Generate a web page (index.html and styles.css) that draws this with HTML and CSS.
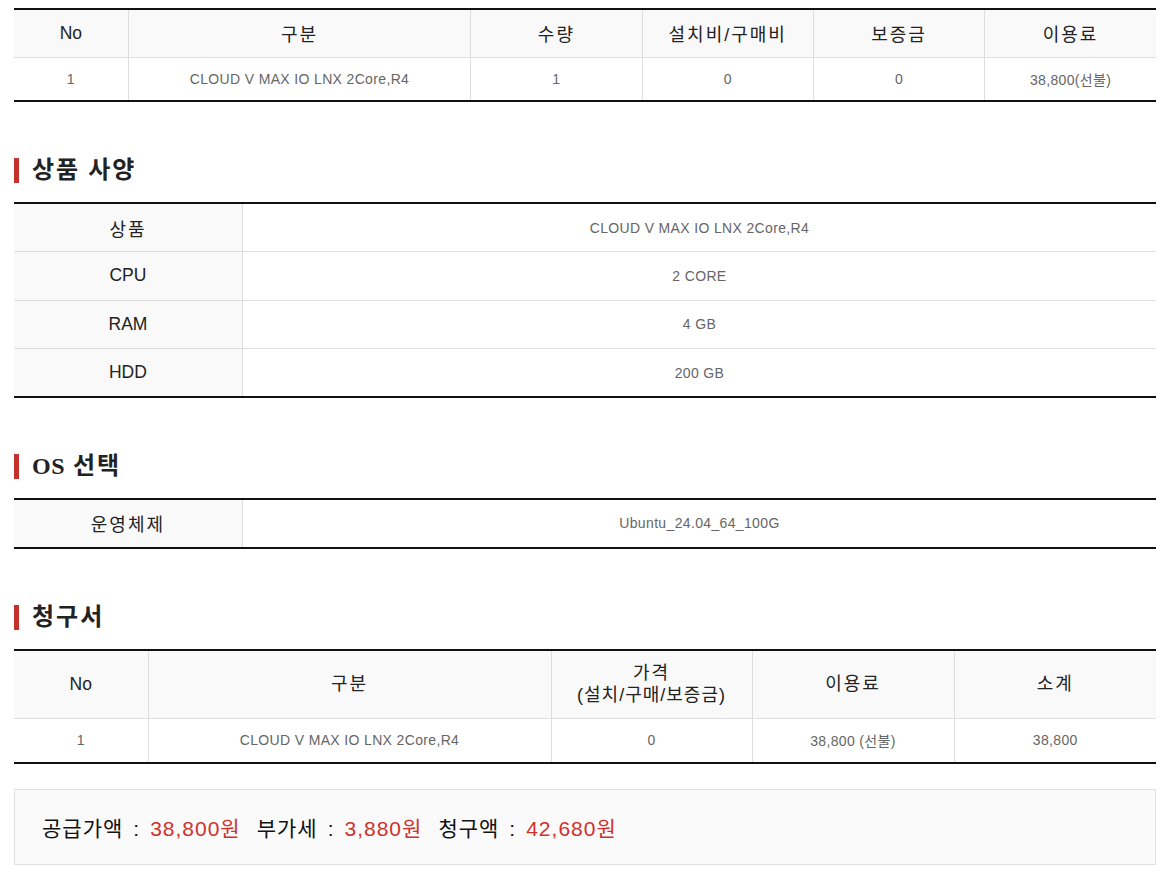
FILE: index.html
```html
<!DOCTYPE html>
<html lang="ko">
<head>
<meta charset="utf-8">
<title>주문 내역</title>
<link rel="stylesheet" href="styles.css">
</head>
<body>
<div class="page">
  <table class="tbl order">
    <colgroup>
      <col class="w10"><col class="w30"><col class="w15"><col class="w15"><col class="w15"><col class="w15">
    </colgroup>
    <thead>
      <tr><th>No</th><th class="ko">구분</th><th class="ko">수량</th><th class="ko">설치비/구매비</th><th class="ko">보증금</th><th class="ko">이용료</th></tr>
    </thead>
    <tbody>
      <tr><td>1</td><td>CLOUD V MAX IO LNX 2Core,R4</td><td>1</td><td>0</td><td>0</td><td>38,800(선불)</td></tr>
    </tbody>
  </table>

  <h2 class="sec-title">상품 사양</h2>
  <table class="tbl spec">
    <colgroup><col class="w20"><col class="w80"></colgroup>
    <tbody>
      <tr><th class="ko">상품</th><td>CLOUD V MAX IO LNX 2Core,R4</td></tr>
      <tr><th>CPU</th><td>2 CORE</td></tr>
      <tr><th>RAM</th><td>4 GB</td></tr>
      <tr><th>HDD</th><td>200 GB</td></tr>
    </tbody>
  </table>

  <h2 class="sec-title"><span class="latin">OS</span> 선택</h2>
  <table class="tbl spec os">
    <colgroup><col class="w20"><col class="w80"></colgroup>
    <tbody>
      <tr><th class="ko">운영체제</th><td>Ubuntu_24.04_64_100G</td></tr>
    </tbody>
  </table>

  <h2 class="sec-title">청구서</h2>
  <table class="tbl invoice">
    <colgroup>
      <col class="c-no"><col class="c-name"><col class="c-price"><col class="c-fee"><col class="c-sum">
    </colgroup>
    <thead>
      <tr><th>No</th><th class="ko">구분</th><th class="ko">가격<br><span class="sub">(설치/구매/보증금)</span></th><th class="ko">이용료</th><th class="ko">소계</th></tr>
    </thead>
    <tbody>
      <tr><td>1</td><td>CLOUD V MAX IO LNX 2Core,R4</td><td>0</td><td>38,800 (선불)</td><td>38,800</td></tr>
    </tbody>
  </table>

  <div class="summary">
    <span class="item"><span class="lbl">공급가액</span><span class="colon">:</span><span class="val">38,800원</span></span>
    <span class="item"><span class="lbl">부가세</span><span class="colon">:</span><span class="val">3,880원</span></span>
    <span class="item"><span class="lbl">청구액</span><span class="colon">:</span><span class="val">42,680원</span></span>
  </div>
</div>
</body>
</html>
```

FILE: styles.css
```css
* { box-sizing: border-box; }
html, body { margin: 0; padding: 0; background: #fff; }
body {
  font-family: "Liberation Sans", "Noto Sans CJK KR", sans-serif;
  color: #333;
}
.page {
  width: 1169px;
  padding: 8px 13px 0 14px;
}
.tbl {
  width: 100%;
  border-collapse: collapse;
  table-layout: fixed;
  border-top: 2px solid #111;
  border-bottom: 2px solid #111;
}
.tbl th, .tbl td {
  border: 1px solid #dedede;
  text-align: center;
  padding: 0;
}
.tbl tr > :first-child { border-left: none; }
.tbl tr > :last-child { border-right: none; }
.tbl th {
  background: #f9f9f9;
  font-weight: normal;
  font-size: 17.5px;
  color: #222;
}
.tbl th.ko {
  font-size: 18px;
  letter-spacing: 2px;
}
.tbl th .sub { letter-spacing: 1px; }
.tbl td {
  font-size: 14px;
  letter-spacing: 0.35px;
  color: #666;
}
.order thead th { height: 48px; border-top: none; }
.order tbody td { height: 44px; border-bottom: none; }

.w10 { width: 10%; }
.w15 { width: 15%; }
.w20 { width: 20%; }
.w30 { width: 30%; }
.w80 { width: 80%; }

.spec th, .spec td { height: 48.5px; }
.spec tr:first-child > * { border-top: none; }
.spec tr:last-child > * { border-bottom: none; }
.os th, .os td { height: 48.5px; }

.c-no { width: 134px; }
.c-name { width: 403px; }
.c-price { width: 201px; }
.c-fee { width: 202px; }
.c-sum { width: 202px; }
.invoice thead th { height: 69px; border-top: none; line-height: 22px; }
.invoice tbody td { height: 44px; border-bottom: none; }

.sec-title {
  margin: 56px 0 19px;
  border-left: 5px solid #c4302b;
  padding-left: 13px;
  height: 25px;
  line-height: 25px;
  font-family: "Liberation Serif", "Noto Sans CJK KR", serif;
  font-size: 24px;
  letter-spacing: 2px;
  font-weight: bold;
  color: #222;
}
.sec-title .latin { letter-spacing: 0.5px; }

.summary {
  margin-top: 25px;
  height: 76px;
  border: 1px solid #e0e0e0;
  background: #fafafa;
  padding-left: 27px;
  display: flex;
  align-items: center;
  font-size: 21px;
  letter-spacing: 1px;
  color: #111;
}
.summary .item { margin-right: 16px; }
.summary .colon { margin: 0 10px; }
.summary .val { color: #d0312d; }
```
